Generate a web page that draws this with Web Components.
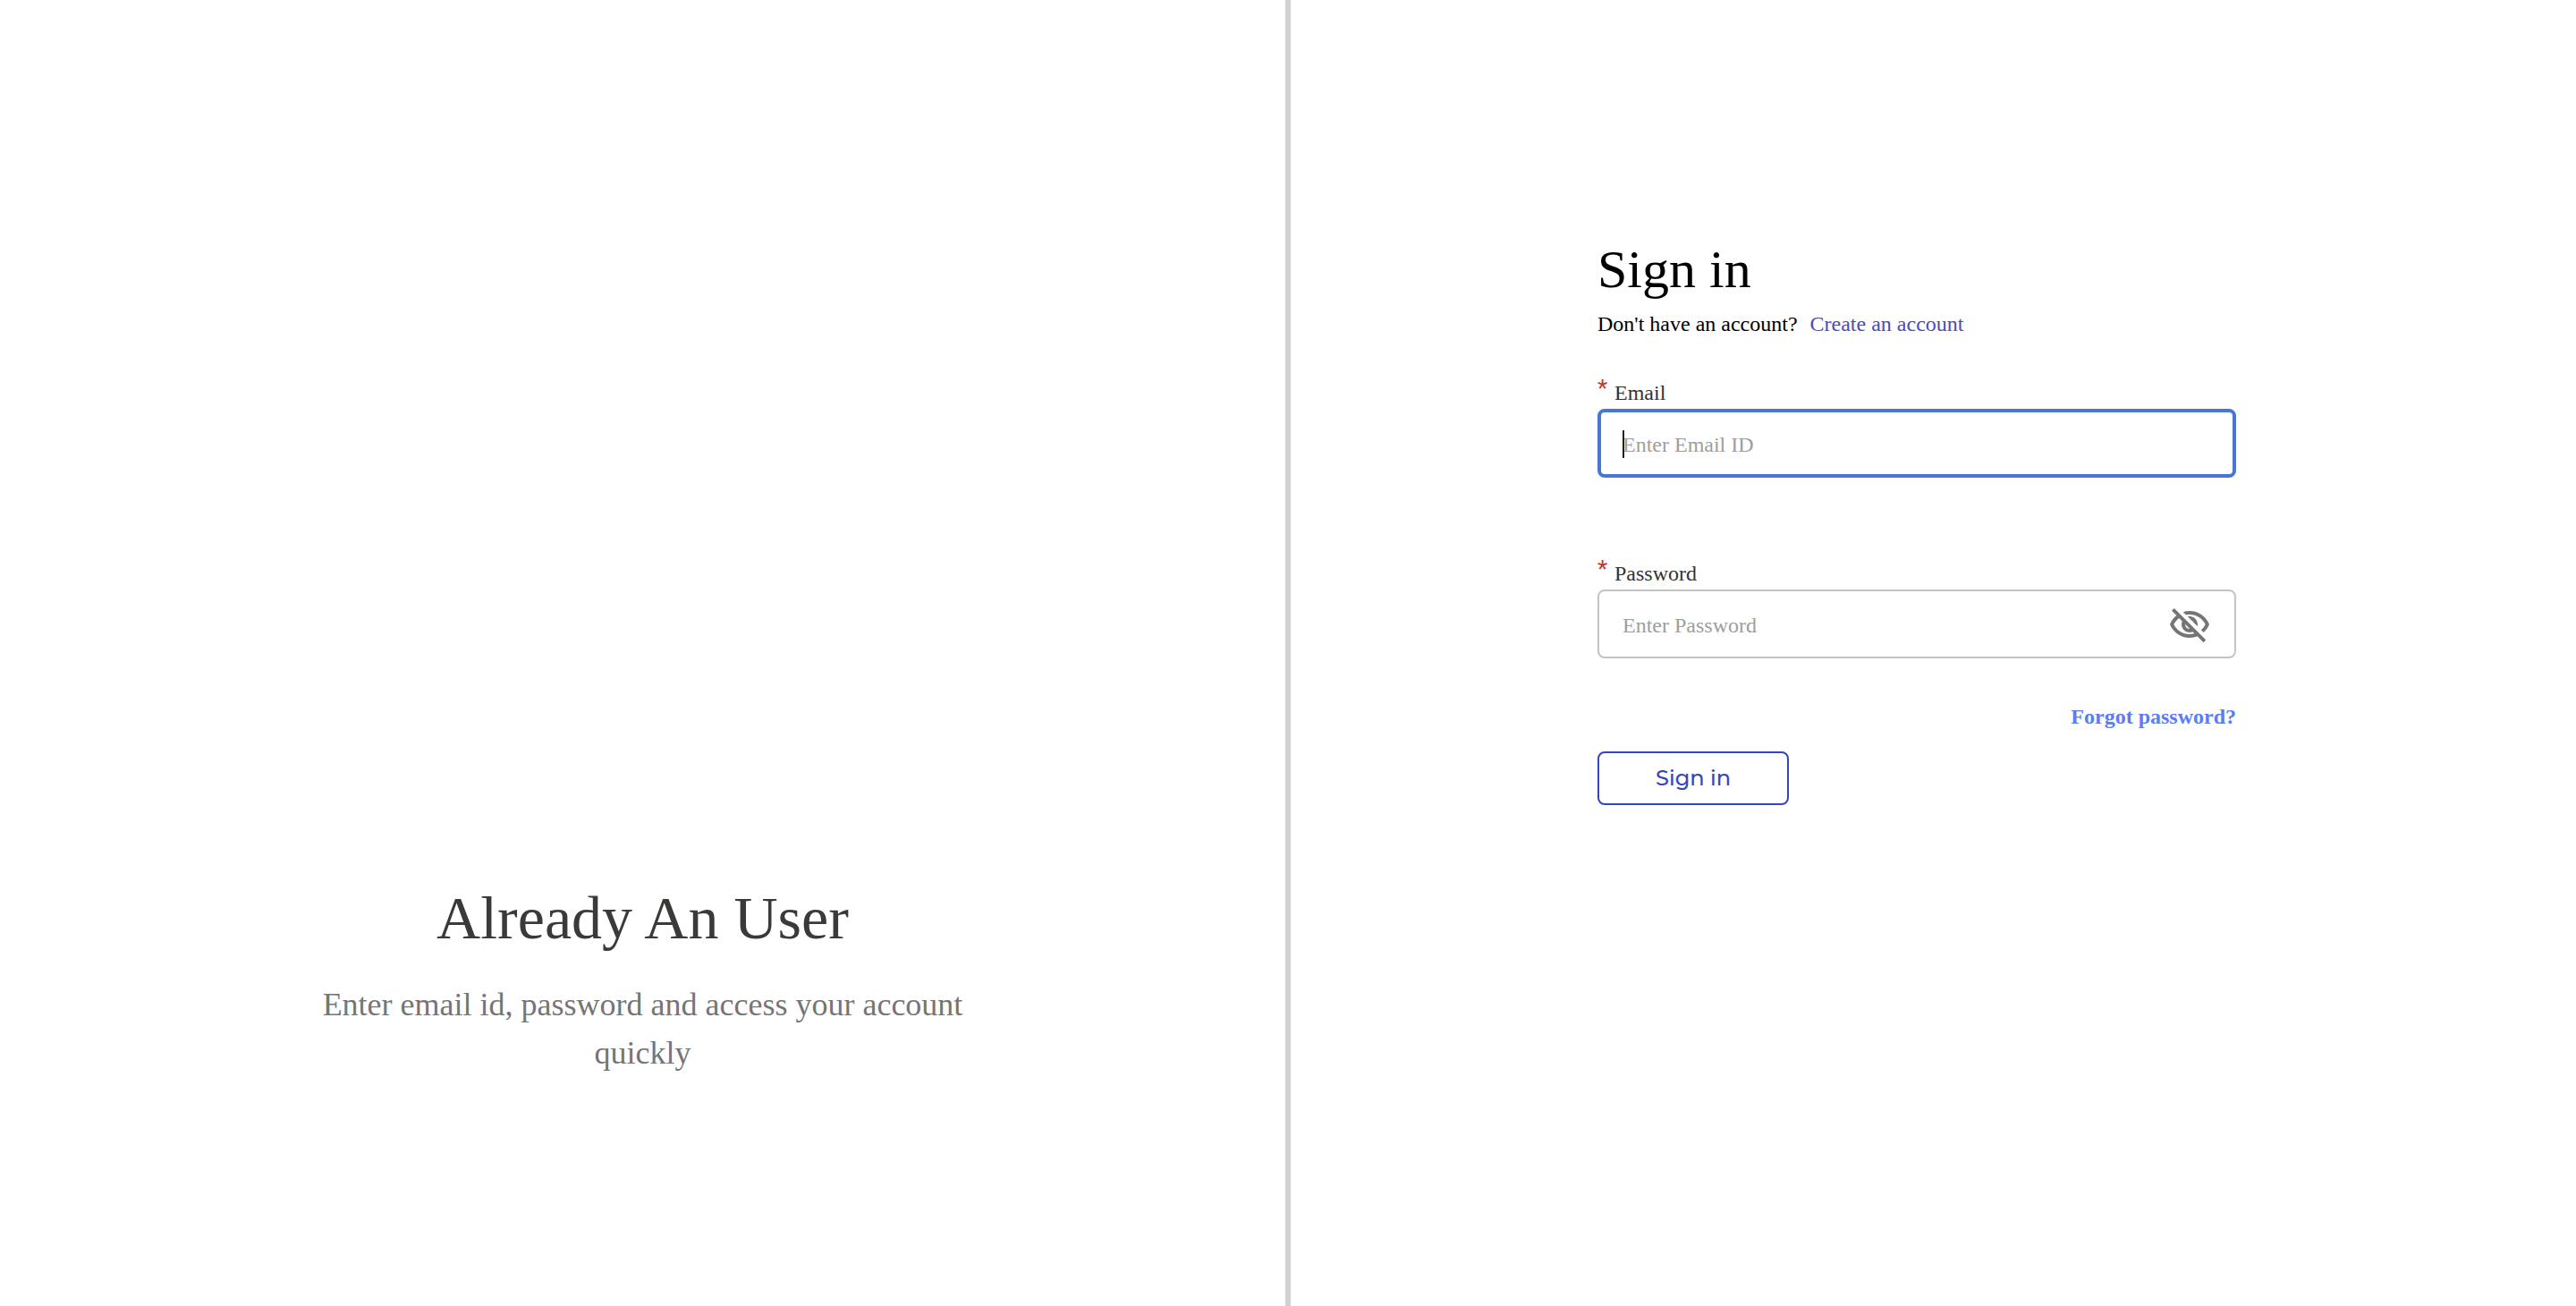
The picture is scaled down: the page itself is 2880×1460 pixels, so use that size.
<!DOCTYPE html>
<html lang="en">
<head>
<meta charset="utf-8">
<meta name="viewport" content="width=device-width, initial-scale=1">
<title>Sign in</title>
<style>
  html, body { margin: 0; background: #fff; }
  body { font-family: "Liberation Serif", "Times New Roman", serif; font-size: 24px; line-height: 36px; color: #000; }
</style>
</head>
<body>
<split-page>
  <welcome-panel slot="start">
    <span slot="title">Already An User</span>
    Enter email id, password and access your account quickly
  </welcome-panel>
  <signin-form></signin-form>
</split-page>

<script>
  const define = (name, html, setup) => customElements.define(name, class extends HTMLElement {
    constructor() {
      super();
      this.attachShadow({ mode: 'open' }).innerHTML = html;
    }
    connectedCallback() { if (setup) setup.call(this, this.shadowRoot); }
  });

  define('split-page', `
    <style>
      :host { display: grid; grid-template-columns: minmax(0, 1fr) 6px minmax(0, 1fr); min-height: 100vh; }
      section, main { display: flex; }
      .divider { background: #d1d1d1; }
      main { justify-content: center; align-items: flex-start; box-sizing: border-box; padding: 265px 37px 40px 0; }
    </style>
    <section><slot name="start"></slot></section>
    <div class="divider"></div>
    <main><slot></slot></main>`);

  define('welcome-panel', `
    <style>
      :host { flex: 1; display: flex; flex-direction: column; justify-content: flex-end; align-items: center; gap: 28px; padding-bottom: 256px; text-align: center; }
      h2 { margin: 0; font-size: 68px; line-height: 84px; font-weight: 400; color: #3b3a39; }
      p { margin: 0; width: 55%; font-size: 36px; line-height: 54px; color: #757575; }
    </style>
    <h2><slot name="title"></slot></h2>
    <p><slot></slot></p>`);

  define('text-field', `
    <style>
      :host { display: block; }
      label { display: flex; align-items: flex-start; gap: 8px; color: #333; }
      .star { width: 11px; font-family: Roboto, sans-serif; font-size: 26px; line-height: 26px; color: #c0392b; }
      .box { position: relative; display: flex; align-items: center; box-sizing: border-box; height: 77px; padding: 2px 26px 0; border: 2px solid #c4c4c4; border-radius: 8px; }
      :host([active]) .box { border: 4px solid #4876d0; padding: 2px 24px 0; }
      input { flex: 1; min-width: 0; padding: 0; border: 0; outline: 0; background: none; font: inherit; color: #222; }
      :host([active]) input { caret-color: transparent; }
      input::placeholder { color: #9e9e9e; opacity: 1; }
      .caret { display: none; position: absolute; left: 24px; width: 2px; height: 31px; background: #222; }
      :host([active]) .caret { display: block; }
    </style>
    <label for="control"><span class="star">*</span><span class="name"></span></label>
    <div class="box"><input id="control"><span class="caret"></span><slot></slot></div>`,
    function (root) {
      root.querySelector('.name').textContent = this.getAttribute('label');
      const input = root.querySelector('input');
      input.type = this.getAttribute('type') || 'text';
      input.placeholder = this.getAttribute('placeholder');
      input.required = true;
      this.addEventListener('toggle-visibility', () => {
        input.type = input.type === 'password' ? 'text' : 'password';
      });
    });

  define('visibility-toggle', `
    <style>
      :host { display: flex; }
      button { display: flex; padding: 0; border: 0; background: none; color: #757575; cursor: pointer; }
      svg { width: 48px; height: 48px; fill: currentColor; }
    </style>
    <button type="button" aria-label="Show password">
      <svg viewBox="0 0 24 24" aria-hidden="true"><path d="M12 6c3.79 0 7.17 2.13 8.82 5.5-.59 1.22-1.42 2.27-2.41 3.12l1.41 1.41c1.39-1.23 2.49-2.77 3.18-4.53C21.27 7.11 17 4 12 4c-1.27 0-2.49.2-3.64.57l1.65 1.65C10.66 6.09 11.32 6 12 6zm-1.07 1.14L13 9.21c.57.25 1.03.71 1.28 1.28l2.07 2.07c.08-.34.14-.7.14-1.07C16.5 9.01 14.48 7 12 7c-.37 0-.72.05-1.07.14zM2.01 3.87l2.68 2.68C3.06 7.83 1.77 9.53 1 11.5 2.73 15.89 7 19 12 19c1.52 0 2.98-.29 4.32-.82l3.42 3.42 1.41-1.41L3.42 2.45 2.01 3.87zm7.5 7.5l2.61 2.61c-.04.01-.08.02-.12.02-1.38 0-2.5-1.12-2.5-2.5 0-.05.01-.08.01-.13zm-3.4-3.4l1.75 1.75c-.23.55-.36 1.15-.36 1.78 0 2.48 2.02 4.5 4.5 4.5.63 0 1.23-.13 1.77-.36l.98.98c-.88.24-1.8.38-2.75.38-3.79 0-7.17-2.13-8.82-5.5.7-1.43 1.72-2.61 2.93-3.53z"/></svg>
    </button>`,
    function (root) {
      root.querySelector('button').addEventListener('click', () =>
        this.dispatchEvent(new Event('toggle-visibility', { bubbles: true })));
    });

  define('signin-form', `
    <style>
      :host { display: block; width: 51%; }
      h1 { margin: 0 0 7px; font-size: 60px; line-height: 72px; font-weight: 400; }
      a { text-decoration: none; }
      .hint { display: flex; gap: 14px; margin: 0 0 41px; }
      .hint a { color: #4a4abf; }
      .fields { display: flex; flex-direction: column; gap: 89px; }
      .forgot { display: flex; justify-content: flex-end; margin: 47px 0 21px; font-weight: 700; }
      .forgot a { color: #5c7cf5; }
      button { width: 30%; height: 60px; padding: 0; border: 2px solid #3346c2; border-radius: 8px; background: #fff; color: #3346c2; font: 500 24px/36px Montserrat, Inter, sans-serif; cursor: pointer; }
    </style>
    <form>
      <h1>Sign in</h1>
      <p class="hint"><span>Don't have an account?</span><a href="#create">Create an account</a></p>
      <div class="fields">
        <text-field label="Email" type="email" placeholder="Enter Email ID" active></text-field>
        <text-field label="Password" type="password" placeholder="Enter Password"><visibility-toggle></visibility-toggle></text-field>
      </div>
      <div class="forgot"><a href="#forgot">Forgot password?</a></div>
      <button type="submit">Sign in</button>
    </form>`,
    function (root) {
      root.querySelector('form').addEventListener('submit', (event) => event.preventDefault());
    });
</script>
</body>
</html>
